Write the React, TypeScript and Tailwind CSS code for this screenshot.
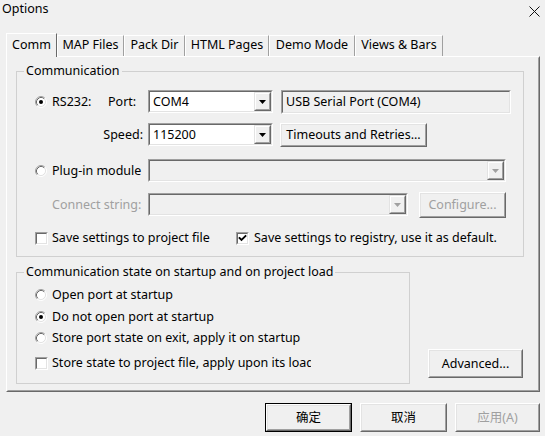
import React from "react";

function Radio({ checked }: { checked?: boolean }) {
  return (
    <svg width="12" height="12" viewBox="0 0 12 12" className="shrink-0">
      <circle cx="6" cy="6" r="4.5" fill="#ffffff" />
      <path d="M2.11 9.89 A5.5 5.5 0 0 1 9.89 2.11" fill="none" stroke="#a0a0a0" strokeWidth="1" />
      <path d="M9.89 2.11 A5.5 5.5 0 0 1 2.11 9.89" fill="none" stroke="#ffffff" strokeWidth="1" />
      <path d="M2.82 9.18 A4.5 4.5 0 0 1 9.18 2.82" fill="none" stroke="#696969" strokeWidth="1" />
      <path d="M9.18 2.82 A4.5 4.5 0 0 1 2.82 9.18" fill="none" stroke="#e3e3e3" strokeWidth="1" />
      {checked && <circle cx="6" cy="6" r="2" fill="#000000" />}
    </svg>
  );
}

function Check({ checked }: { checked?: boolean }) {
  return (
    <div className="w-[13px] h-[13px] shrink-0 border border-t-[#a0a0a0] border-l-[#a0a0a0] border-b-white border-r-white">
      <div className="w-full h-full bg-white border border-t-[#696969] border-l-[#696969] border-b-[#e3e3e3] border-r-[#e3e3e3] flex items-center justify-center">
        {checked && (
          <svg width="9" height="9" viewBox="0 0 9 9">
            <path d="M1.5 4 L3.5 6 L7.5 2" fill="none" stroke="#000" strokeWidth="1.8" strokeLinecap="square" />
          </svg>
        )}
      </div>
    </div>
  );
}

function DropBtn({ disabled }: { disabled?: boolean }) {
  return (
    <div className="w-[17px] h-full shrink-0 border border-t-[#e3e3e3] border-l-[#e3e3e3] border-b-[#696969] border-r-[#696969]">
      <div className="w-full h-full bg-[#f0f0f0] border border-t-white border-l-white border-b-[#a0a0a0] border-r-[#a0a0a0] flex items-center justify-center">
        <svg width="7" height="4" viewBox="0 0 7 4">
          <path d="M0 0 H7 L3.5 4 Z" fill={disabled ? "#a0a0a0" : "#000000"} />
        </svg>
      </div>
    </div>
  );
}

function Combo({ className, value, disabled }: { className: string; value?: string; disabled?: boolean }) {
  return (
    <div className={`${className} shrink-0 border border-t-[#a0a0a0] border-l-[#a0a0a0] border-b-white border-r-white`}>
      <div
        className={`h-full flex border border-t-[#696969] border-l-[#696969] border-b-[#e3e3e3] border-r-[#e3e3e3] ${
          disabled ? "bg-[#f0f0f0]" : "bg-white"
        }`}
      >
        <div className="flex-1 pl-[3px] flex items-center whitespace-nowrap">{value}</div>
        <DropBtn disabled={disabled} />
      </div>
    </div>
  );
}

function Btn({
  className,
  children,
  disabled,
  def,
}: {
  className: string;
  children: React.ReactNode;
  disabled?: boolean;
  def?: boolean;
}) {
  const inner = (
    <div className="w-full h-full border border-t-white border-l-white border-b-[#696969] border-r-[#696969]">
      <div
        className={`w-full h-full bg-[#f0f0f0] border border-t-[#e3e3e3] border-l-[#e3e3e3] border-b-[#a0a0a0] border-r-[#a0a0a0] flex items-center justify-center whitespace-nowrap ${
          disabled ? "text-[#a0a0a0]" : "text-black"
        }`}
      >
        {children}
      </div>
    </div>
  );
  if (def) {
    return <div className={`${className} shrink-0 border border-black`}>{inner}</div>;
  }
  return <div className={`${className} shrink-0`}>{inner}</div>;
}

const tabs = [
  { label: "MAP Files", w: "w-[67px]" },
  { label: "Pack Dir", w: "w-[61px]" },
  { label: "HTML Pages", w: "w-[84px]" },
  { label: "Demo Mode", w: "w-[86px]" },
  { label: "Views & Bars", w: "w-[88px]" },
];

export default function App() {
  return (
    <div className="w-[545px] h-[436px] bg-[#f0f0f0] text-[12.5px] leading-[16px] text-black font-['Noto_Sans','Noto_Sans_CJK_SC',sans-serif] overflow-hidden select-none">
      {/* Title bar */}
      <div className="h-[26px] flex items-start justify-between">
        <span className="pl-[2px] pt-[1px]">Options</span>
        <svg width="11" height="11" viewBox="0 0 11 11" className="mt-[6px] mr-[5px]">
          <path d="M0.5 0.5 L10.5 10.5 M10.5 0.5 L0.5 10.5" stroke="#111" strokeWidth="1" />
        </svg>
      </div>

      {/* Tabs */}
      <div className="mt-[7px] h-[24px] -mb-[1px] relative z-10 flex items-end pl-[6px]">
        <div className="w-[51px] h-[24px] bg-[#f0f0f0] border-t border-l border-r border-t-white border-l-white border-r-[#696969] text-center pt-[3px]">
          Comm
        </div>
        {tabs.map((t) => (
          <div
            key={t.label}
            className={`${t.w} h-[21px] mb-[1px] border-t border-l border-r border-t-white border-l-white border-r-[#a0a0a0] text-center pt-[1px] whitespace-nowrap`}
          >
            {t.label}
          </div>
        ))}
      </div>

      {/* Tab panel */}
      <div className="ml-[6px] w-[534px] h-[336px] border border-t-white border-l-white border-b-[#696969] border-r-[#696969]">
        <div className="w-full h-full border border-t-[#f0f0f0] border-l-[#f0f0f0] border-b-[#a0a0a0] border-r-[#a0a0a0] flex flex-col">
          {/* Communication group */}
          <fieldset className="ml-[8px] mt-[5px] w-[508px] h-[194px] border border-[#d0d0d0] p-0 m-0">
            <legend className="ml-[7px] px-[2px] leading-[16px]">Communication</legend>
            {/* Row 1 */}
            <div className="mt-[11px] h-[23px] flex items-center">
              <div className="w-[91px] flex items-center pl-[18px]">
                <Radio checked />
                <span className="ml-[5px]">RS232:</span>
              </div>
              <div className="w-[40px]">Port:</div>
              <Combo className="w-[125px] h-[23px]" value="COM4" />
              <div className="ml-[8px] w-[230px] h-[24px] border border-t-[#a0a0a0] border-l-[#a0a0a0] border-b-white border-r-white">
                <div className="w-full h-full border border-t-[#696969] border-l-[#696969] border-b-[#e3e3e3] border-r-[#e3e3e3] flex items-center pl-[3px] bg-[#f0f0f0]">
                  USB Serial Port (COM4)
                </div>
              </div>
            </div>
            {/* Row 2 */}
            <div className="mt-[10px] h-[24px] flex items-start">
              <div className="w-[131px] h-[23px] flex items-center justify-end pr-[5px]">Speed:</div>
              <Combo className="w-[125px] h-[23px]" value="115200" />
              <Btn className="ml-[7px] w-[147px] h-[24px]">Timeouts and Retries...</Btn>
            </div>
            {/* Row 3 */}
            <div className="mt-[12px] h-[23px] flex items-center">
              <div className="w-[131px] flex items-center pl-[18px]">
                <Radio />
                <span className="ml-[5px] whitespace-nowrap">Plug-in module</span>
              </div>
              <Combo className="w-[358px] h-[23px]" disabled />
            </div>
            {/* Row 4 */}
            <div className="mt-[10px] h-[26px] flex items-start">
              <div className="w-[131px] h-[25px] flex items-center pl-[35px] text-[#a0a0a0] whitespace-nowrap">
                Connect string:
              </div>
              <Combo className="mt-[1px] w-[260px] h-[23px]" disabled />
              <Btn className="ml-[11px] w-[87px] h-[26px]" disabled>
                Configure...
              </Btn>
            </div>
            {/* Row 5 */}
            <div className="mt-[12px] h-[16px] flex items-center">
              <div className="w-[219px] flex items-center pl-[18px]">
                <Check />
                <span className="ml-[4px] whitespace-nowrap">Save settings to project file</span>
              </div>
              <Check checked />
              <span className="ml-[5px] whitespace-nowrap">Save settings to registry, use it as default.</span>
            </div>
          </fieldset>

          {/* Startup group + Advanced */}
          <div className="mt-[7px] flex items-end">
            <fieldset className="ml-[8px] w-[394px] h-[120px] border border-[#d0d0d0] p-0 m-0">
              <legend className="ml-[7px] px-[2px] leading-[16px]">Communication state on startup and on project load</legend>
              <div className="mt-[7px] h-[16px] flex items-center pl-[18px]">
                <Radio />
                <span className="ml-[5px]">Open port at startup</span>
              </div>
              <div className="mt-[6px] h-[16px] flex items-center pl-[18px]">
                <Radio checked />
                <span className="ml-[5px]">Do not open port at startup</span>
              </div>
              <div className="mt-[5px] h-[16px] flex items-center pl-[18px]">
                <Radio />
                <span className="ml-[5px]">Store port state on exit, apply it on startup</span>
              </div>
              <div className="mt-[9px] h-[16px] flex items-center pl-[18px]">
                <Check />
                <span className="ml-[4px] w-[259px] overflow-hidden whitespace-nowrap">
                  Store state to project file, apply upon its load
                </span>
              </div>
            </fieldset>
            <Btn className="ml-[18px] mb-[6px] w-[95px] h-[29px]">Advanced...</Btn>
          </div>
        </div>
      </div>

      {/* Bottom buttons */}
      <div className="mt-[11px] pl-[265px] flex gap-[8px]">
        <Btn className="w-[87px] h-[29px]" def>
          确定
        </Btn>
        <Btn className="w-[87px] h-[29px]">取消</Btn>
        <Btn className="w-[85px] h-[29px]" disabled>
          应用(A)
        </Btn>
      </div>
    </div>
  );
}
